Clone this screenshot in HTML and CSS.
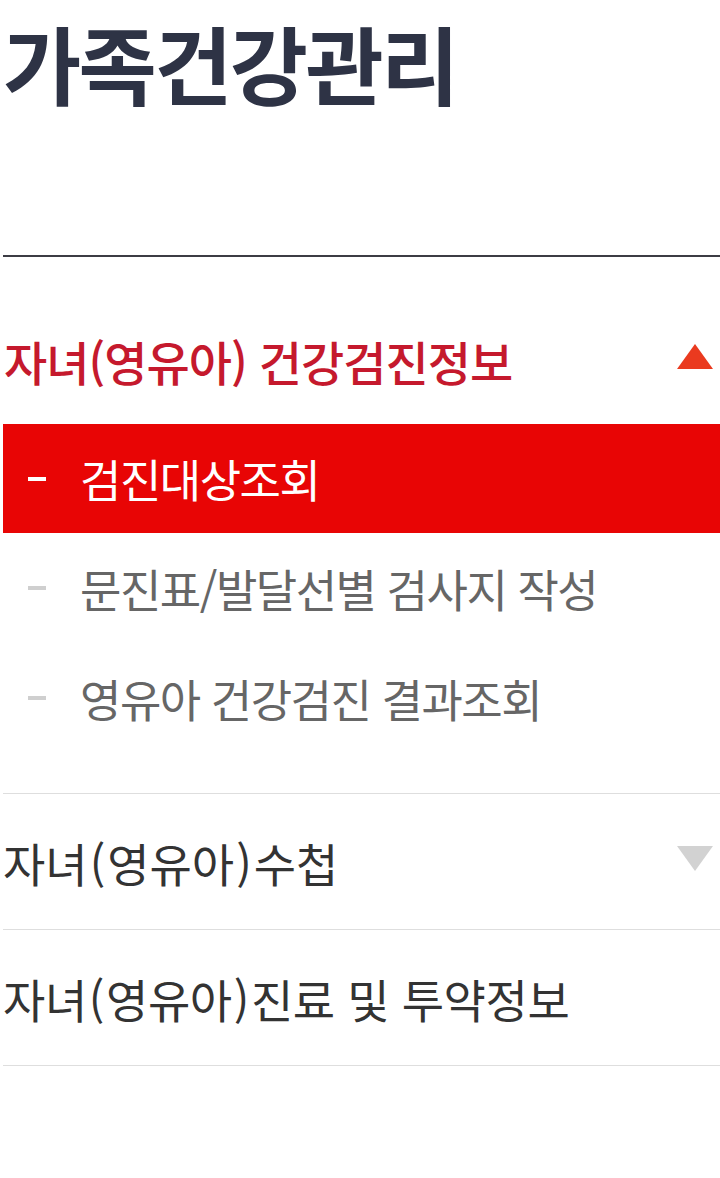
FILE: index.html
```html
<!DOCTYPE html>
<html lang="ko">
<head>
<meta charset="utf-8">
<title>가족건강관리</title>
<link rel="stylesheet" href="styles.css">
</head>
<body>
<div class="page">
  <h1 class="title">가족건강관리</h1>
  <nav class="menu">
    <div class="group open">
      <div class="group-head">
        <span class="group-label">자녀(영유아) 건강검진정보</span>
        <span class="tri tri-up"></span>
      </div>
      <ul class="sub">
        <li class="sub-item active"><span class="dash"></span><span class="sub-label">검진대상조회</span></li>
        <li class="sub-item"><span class="dash"></span><span class="sub-label">문진표/발달선별 검사지 작성</span></li>
        <li class="sub-item"><span class="dash"></span><span class="sub-label">영유아 건강검진 결과조회</span></li>
      </ul>
    </div>
    <div class="group">
      <div class="row">
        <span class="row-label">자녀<span class="paren">(</span>영유아<span class="paren">)</span>수첩</span>
        <span class="tri tri-down"></span>
      </div>
    </div>
    <div class="group">
      <div class="row">
        <span class="row-label tight">자녀<span class="paren">(</span>영유아<span class="paren">)</span>진료 및 투약정보</span>
      </div>
    </div>
  </nav>
</div>
</body>
</html>
```

FILE: styles.css
```css
html, body {
  margin: 0;
  padding: 0;
  background: #ffffff;
}

body {
  font-family: "Noto Sans CJK KR", "Noto Sans", sans-serif;
  color: #333333;
}

.page {
  padding-left: 3px;
}

.title {
  margin: 0;
  height: 255px;
  box-sizing: border-box;
  padding-top: 0;
  font-size: 85px;
  line-height: 124px;
  font-weight: 700;
  letter-spacing: -2.6px;
  color: #2e3345;
}

.menu {
  border-top: 2px solid #3c3c44;
}

.group {
  border-bottom: 1px solid #dedede;
}

.group-head {
  display: flex;
  align-items: center;
  justify-content: space-between;
  height: 86px;
  padding: 60px 7px 21px 1px;
}

.group-label {
  font-size: 47px;
  font-weight: 500;
  letter-spacing: -1px;
  color: #c5192d;
}

.tri {
  display: block;
  width: 0;
  height: 0;
  border-left: 18px solid transparent;
  border-right: 18px solid transparent;
}

.tri-up {
  border-bottom: 25px solid #ea3a1f;
  margin-top: -8px;
}

.tri-down {
  border-top: 25px solid #d2d2d2;
  margin-top: -6px;
}

.sub {
  list-style: none;
  margin: 0;
  padding: 0 0 40px;
}

.sub-item {
  display: flex;
  align-items: center;
  height: 110px;
  padding-left: 25px;
  color: #666666;
}

.sub-item.active {
  height: 109px;
  background: #e80505;
  color: #ffffff;
}

.dash {
  display: block;
  width: 18px;
  height: 4px;
  background: #cfcfcf;
  margin-right: 34px;
}

.active .dash {
  background: #ffffff;
}

.sub-label {
  font-size: 45px;
  letter-spacing: -1.5px;
}

.row {
  display: flex;
  align-items: center;
  justify-content: space-between;
  height: 135px;
  padding-right: 7px;
}

.row-label {
  font-size: 46px;
  letter-spacing: 0;
  color: #333333;
}

.row-label.tight {
  letter-spacing: -0.4px;
}

.paren {
  margin: 0 2px;
}
```
